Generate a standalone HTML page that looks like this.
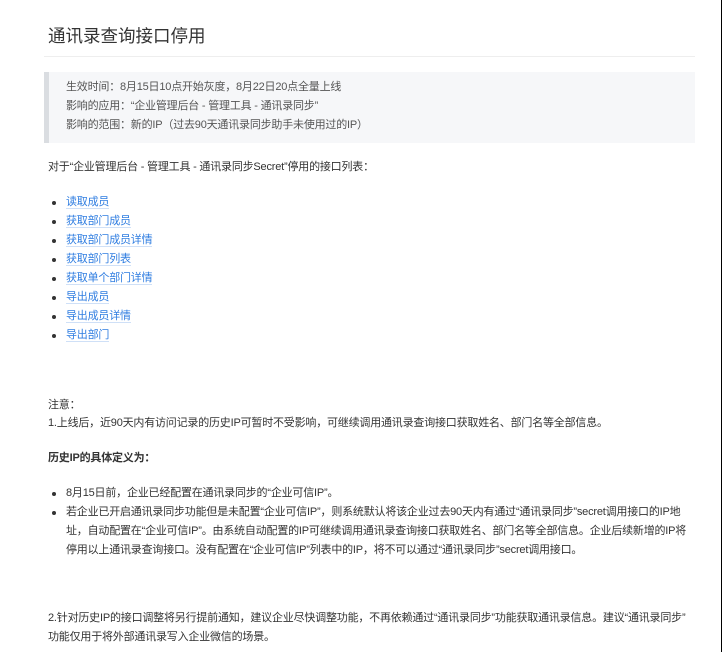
<!DOCTYPE html>
<html><head><meta charset="utf-8"><style>
body{margin:0;width:722px;height:652px;background:#fff;font-family:"Liberation Sans","Noto Sans CJK SC",sans-serif;color:#333;font-size:11px;letter-spacing:-0.2px;position:relative;overflow:hidden}
.r{position:absolute;right:0;top:0;width:1px;height:652px;background:#000}
.t{position:absolute;white-space:nowrap;line-height:19px}
h1{position:absolute;left:48px;top:23px;margin:0;font-size:17.5px;font-weight:normal;color:#333;line-height:26px;letter-spacing:0}
.hr{position:absolute;left:44px;top:56px;width:651px;height:1px;background:#eee}
.bq{position:absolute;left:44px;top:72px;width:651px;height:71px;background:#f6f7f9;border-left:5px solid #dadde1;box-sizing:border-box}
.bq div{position:absolute;left:17px;color:#555;white-space:nowrap;line-height:19px}
a{color:#2f7de1;text-decoration:none;border-bottom:1px solid #cfe0f7}
.b{position:absolute;left:52px;width:4px;height:4px;border-radius:50%;background:#333}
</style></head><body>
<div class="r"></div>
<h1>通讯录查询接口停用</h1>
<div class="hr"></div>
<div class="bq">
<div style="top:6px">生效时间：8月15日10点开始灰度，8月22日20点全量上线</div>
<div style="top:25px">影响的应用：“企业管理后台 - 管理工具 - 通讯录同步”</div>
<div style="top:44px">影响的范围：新的IP（过去90天通讯录同步助手未使用过的IP）</div>
</div>
<div class="t" style="left:48px;top:158px">对于“企业管理后台 - 管理工具 - 通讯录同步Secret”停用的接口列表：</div>

<div class="b" style="top:201px"></div><div class="t" style="left:66px;top:193px"><a>读取成员</a></div>
<div class="b" style="top:220px"></div><div class="t" style="left:66px;top:212px"><a>获取部门成员</a></div>
<div class="b" style="top:239px"></div><div class="t" style="left:66px;top:231px"><a>获取部门成员详情</a></div>
<div class="b" style="top:258px"></div><div class="t" style="left:66px;top:250px"><a>获取部门列表</a></div>
<div class="b" style="top:277px"></div><div class="t" style="left:66px;top:269px"><a>获取单个部门详情</a></div>
<div class="b" style="top:296px"></div><div class="t" style="left:66px;top:288px"><a>导出成员</a></div>
<div class="b" style="top:315px"></div><div class="t" style="left:66px;top:307px"><a>导出成员详情</a></div>
<div class="b" style="top:334px"></div><div class="t" style="left:66px;top:326px"><a>导出部门</a></div>

<div class="t" style="left:48px;top:396px">注意：</div>
<div class="t" style="left:48px;top:414px">1.上线后，近90天内有访问记录的历史IP可暂时不受影响，可继续调用通讯录查询接口获取姓名、部门名等全部信息。</div>
<div class="t" style="left:48px;top:449px;font-weight:bold">历史IP的具体定义为：</div>
<div class="b" style="top:492px"></div><div class="t" style="left:66px;top:484px">8月15日前，企业已经配置在通讯录同步的“企业可信IP”。</div>
<div class="b" style="top:511px"></div>
<div class="t" style="left:66px;top:503px">若企业已开启通讯录同步功能但是未配置“企业可信IP”，则系统默认将该企业过去90天内有通过“通讯录同步”secret调用接口的IP地</div>
<div class="t" style="left:66px;top:522px">址，自动配置在“企业可信IP”。由系统自动配置的IP可继续调用通讯录查询接口获取姓名、部门名等全部信息。企业后续新增的IP将</div>
<div class="t" style="left:66px;top:541px">停用以上通讯录查询接口。没有配置在“企业可信IP”列表中的IP，将不可以通过“通讯录同步”secret调用接口。</div>
<div class="t" style="left:48px;top:609px">2.针对历史IP的接口调整将另行提前通知，建议企业尽快调整功能，不再依赖通过“通讯录同步”功能获取通讯录信息。建议“通讯录同步”</div>
<div class="t" style="left:48px;top:628px">功能仅用于将外部通讯录写入企业微信的场景。</div>
</body></html>
